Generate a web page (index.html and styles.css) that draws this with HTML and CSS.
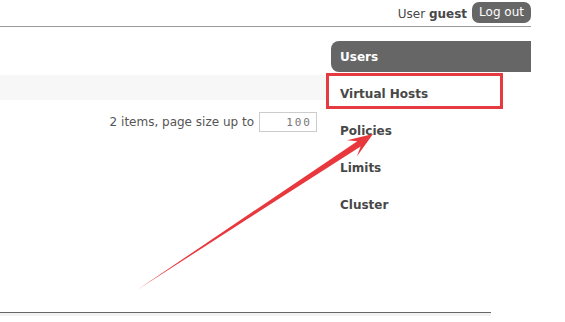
FILE: index.html
```html
<!DOCTYPE html>
<html lang="en">
<head>
  <meta charset="UTF-8">
  <title>RabbitMQ Management - Admin</title>
  <link rel="stylesheet" href="styles.css">
</head>
<body>
  <div class="page">
    <div class="header">
      <span class="login">User <b>guest</b></span>
      <button class="logout">Log out</button>
    </div>

    <div class="content">
      <div class="main">
        <div class="band"></div>
        <div class="paging">
          <span>2 items, page size up to</span>
          <input class="pagesize" type="text" value="100">
        </div>
      </div>

      <ul class="nav">
        <li class="selected">Users</li>
        <li>Virtual Hosts</li>
        <li>Policies</li>
        <li>Limits</li>
        <li>Cluster</li>
      </ul>
    </div>

    <div class="footer"></div>
  </div>

  <svg class="markup" width="565" height="322" viewBox="0 0 565 322">
    <rect x="327.5" y="74.5" width="174" height="33" fill="none" stroke="#e53a3f" stroke-width="3"/>
    <polygon fill="#e8383d" points="137,290 357.3,141.2 347,140.2 373,134 357,156.2 360.6,146.4"/>
  </svg>
</body>
</html>
```

FILE: styles.css
```css
body {
  margin: 0;
  font-family: 'DejaVu Sans', Verdana, sans-serif;
  font-size: 12px;
  color: #484848;
  background: #fff;
}
.page { width: 531px; position: relative; }

.header {
  display: flex;
  justify-content: flex-end;
  align-items: center;
  gap: 5px;
  height: 25px;
  padding-top: 1px;
  border-bottom: 1px solid #999;
}
.login { font-size: 12px; color: #484848; }
.logout {
  font-family: inherit;
  font-size: 12px;
  color: #fff;
  background: #666;
  border: none;
  border-radius: 7px;
  padding: 2px 7px;
  height: 21px;
  margin-bottom: 3px;
}

.content { display: flex; height: 285px; }
.main { width: 326px; padding-top: 48px; }
.band { height: 25px; background: #f7f7f7; }
.paging {
  display: flex;
  justify-content: flex-end;
  align-items: center;
  gap: 5px;
  margin-top: 12px;
  padding-right: 9px;
  font-size: 12px;
  color: #555;
}
.pagesize {
  width: 48px;
  height: 18px;
  padding: 0 4px;
  border: 1px solid #ccc;
  font-family: 'DejaVu Sans Mono', monospace;
  font-size: 11px;
  letter-spacing: 2px;
  color: #777;
  text-align: right;
}

.nav {
  list-style: none;
  margin: 14px 0 0 5px;
  padding: 0;
  flex: 1;
}
.nav li {
  height: 30px;
  line-height: 31px;
  padding: 1px 0 0 9px;
  margin-bottom: 6px;
  font-size: 12px;
  font-weight: bold;
  color: #484848;
}
.nav li.selected {
  background: #666;
  color: #fff;
  border-radius: 8px 0 0 8px;
}

.footer {
  width: 491px;
  border-top: 1px solid #666;
  border-bottom: 3px solid #f2f2f2;
}

.markup { position: absolute; top: 0; left: 0; }
```
